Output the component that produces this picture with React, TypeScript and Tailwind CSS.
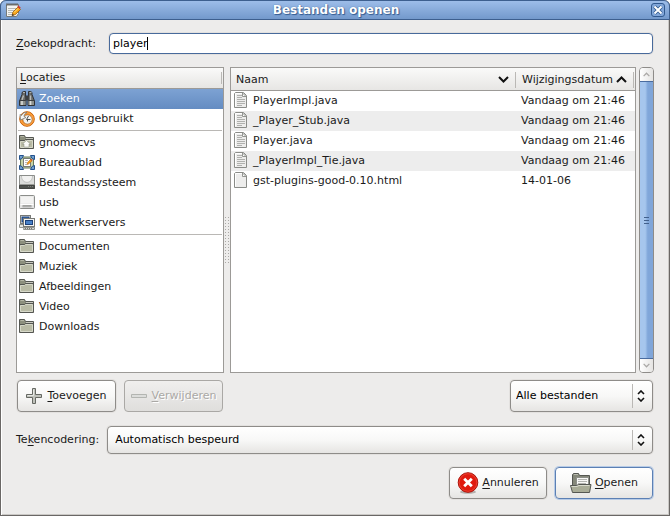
import { useState, type ReactNode } from "react";

const buttonFace =
  "flex h-8 items-center rounded border border-[#8e8c89] bg-linear-to-b from-white via-[#f8f8f7] to-[#e6e5e3] shadow-[0_0_0_1px_#e3e1df]";

const Mnemonic = ({ children }: { children: string }) => (
  <span className="underline underline-offset-2">{children}</span>
);

function NotepadIcon() {
  return (
    <svg width="16" height="16" viewBox="0 0 16 16" aria-hidden="true">
      <path d="M1.500 2.500h12v9l-2 3h-10z" fill="#f4f4f2" stroke="#777a78" />
      <path d="M2 1v3M4 1v3M6 1v3M8 1v3M10 1v3M12 1v3" stroke="#555" strokeWidth="0.8" />
      <path d="M3 6.500h9M3 8.500h7M3 10.500h5M3 12.500h4" stroke="#b6b8b5" />
      <path d="M7 13.500l1-3.500 5-5 2.500 2.500-5 5z" fill="#f9a61a" stroke="#a15d08" strokeWidth="0.8" />
      <path d="M12.300 4.700l1.200-1.200 2.300 2.300-1.300 1.200z" fill="#d33b2c" />
      <path d="M7 13.800l.6-2 1.500 1.400z" fill="#2e2e2e" />
      <path d="M9 10.500l4-4" stroke="#ffe27a" />
    </svg>
  );
}

function SearchIcon() {
  return (
    <svg width="16" height="16" viewBox="0 0 16 16" aria-hidden="true">
      <path d="M4.500.5h2V4L7 8v6.500H.5V10L3 3.500V1.500zM9.500.5h2l1.500 1v2L15.500 10v4.500H9V8l.5-4z" fill="#6a6c6a" stroke="#303234" />
      <rect x="6.500" y="4.500" width="3" height="5" fill="#3c3e40" />
      <path d="M4 1.500h2M10.500 1.500h2" stroke="#b0b2b0" />
      <path d="M4.500 4.500L3 9M11.500 4.500v5" stroke="#b9bbb8" strokeWidth="1.300" />
      <rect x="1" y="10" width="5.500" height="4" fill="#8d908c" />
      <rect x="9.500" y="10" width="5.500" height="4" fill="#8d908c" />
      <path d="M3 10v4M11.500 10v4" stroke="#dcdeda" strokeWidth="1.600" />
      <path d="M1 9.500h5.500M9.500 9.500H15" stroke="#3c3e40" />
    </svg>
  );
}

function RecentIcon() {
  return (
    <svg width="16" height="16" viewBox="0 0 16 16" aria-hidden="true">
      <circle cx="8" cy="8" r="7.300" fill="#f58a1f" stroke="#c9650f" />
      <circle cx="8" cy="8" r="6.200" fill="none" stroke="#ffb45d" strokeWidth="0.8" />
      <circle cx="8.500" cy="8.500" r="4.600" fill="#f3f3f1" stroke="#a7743f" strokeWidth="0.700" />
      <path d="M1 3.500l1.500 1C3.500 2 6 1 8 1.500 6 2.500 5 4 5 5.500l2 1L1.500 9z" fill="#f6f6f4" stroke="#777975" strokeWidth="0.800" />
      <path d="M9.500 5L7.500 8.500h4M8.500 8.500v2" stroke="#4b4d4a" fill="none" />
    </svg>
  );
}

function FolderIcon({ home = false }: { home?: boolean }) {
  return (
    <svg width="16" height="16" viewBox="0 0 16 16" aria-hidden="true">
      <path d="M.5 13.500V.5h5l1 2h8v11z" fill="#8c8f7d" stroke="#555752" />
      <path d="M1.500 1.500H5" stroke="#b5b7a6" />
      <path d="M7 3.500h7" stroke="#c9cac0" />
      <path d="M1.500 12.500v-6h4l1-1h7v7z" fill="#b9bba5" stroke="#d6d8c9" />
      <path d="M1 5.500h4.500l1-1h8" fill="none" stroke="#555752" />
      {home && <path d="M7.500 5.500l4 3.500H10v3H5V9H3.500z" fill="#fafaf7" stroke="#86887b" strokeWidth="0.500" />}
    </svg>
  );
}

function DesktopIcon() {
  return (
    <svg width="16" height="16" viewBox="0 0 16 16" aria-hidden="true">
      <rect x="1.500" y="2" width="13" height="11" fill="#c5d3a7" stroke="#68785d" />
      <path d="M.5.5h4l-1.500 3-2.500 1zM15.500.5h-4l1.500 3 2.500 1zM.5 14.500h4L3 11.500l-2.500-1zM15.500 14.500h-4l1.500-3 2.500-1z" fill="#719fd0" stroke="#23518c" />
      <rect x="4.500" y="3.500" width="7" height="8" fill="#fff" stroke="#777a76" />
      <path d="M6 5.500h3M6 7.500h2M6 9.500h2" stroke="#bbb" />
      <path d="M8 9.500l.5-2L11.500 4.500l1.500 1.500-3.500 3z" fill="#f6a21c" stroke="#b35d0c" strokeWidth="0.500" />
      <path d="M11.500 4.500l1.500 1.500.5-1-1-1z" fill="#d23327" />
    </svg>
  );
}

function DiskIcon() {
  return (
    <svg width="16" height="16" viewBox="0 0 16 16" aria-hidden="true">
      <path d="M.5.500h15v13H.5z" fill="#dcdddb" stroke="#8b8d8a" />
      <path d="M2.500 1C2.500 9.500 13.500 9.500 13.500 1" fill="#f2f2f1" stroke="#c0c1bf" />
      <path d="M.5 10.500h15v3H.5z" fill="#50534f" stroke="#434542" />
      <path d="M1 9.500h14" stroke="#9a9c98" />
      <path d="M9 11.500h5" stroke="#7d807b" strokeDasharray="1 1" />
    </svg>
  );
}

function UsbIcon() {
  return (
    <svg width="16" height="16" viewBox="0 0 16 16" aria-hidden="true">
      <rect x=".5" y=".5" width="15" height="13" rx="1" fill="#e3e3e2" stroke="#8b8d8a" />
      <path d="M2 1.500h12v7H2z" fill="#f3f3f2" />
      <path d="M1.500 9.500h13" stroke="#fff" />
      <path d="M3.500 11h9" stroke="#60625f" />
      <path d="M3.500 12h9" stroke="#b7b8b6" />
    </svg>
  );
}

function NetworkIcon() {
  return (
    <svg width="16" height="16" viewBox="0 0 16 16" aria-hidden="true">
      <rect x="1.500" y=".5" width="10" height="8" fill="#eeeeec" stroke="#777975" />
      <rect x="3" y="2" width="7" height="5" fill="#386eb5" stroke="#1c427b" />
      <path d="M.5 9.500h5v3h-5z" fill="#e2e3e0" stroke="#92948f" />
      <rect x="4.500" y="3.500" width="11" height="8" fill="#f4f4f2" stroke="#777975" />
      <rect x="6.500" y="5.500" width="7" height="4" fill="#4880c7" stroke="#1c427b" />
      <path d="M5 12.500h10.500v2H4.500z" fill="#d5d7d2" stroke="#92948f" />
      <path d="M6 13.500h8" stroke="#777" strokeDasharray="1 1" />
    </svg>
  );
}

function FileIcon({ lines = true }: { lines?: boolean }) {
  return (
    <svg width="14" height="18" viewBox="0 0 14 18" aria-hidden="true" className="shrink-0">
      <path d="M1.500.5h8l3 3v12h-12V1.500z" fill="#ededec" stroke="#8a8c88" />
      <path d="M1.500 14.500v-13h7" fill="none" stroke="#fff" />
      <path d="M8.500 1v3.500h3.500z" fill="#fff" stroke="#8a8c88" strokeWidth="0.900" />
      {lines && <path d="M3 3.500h5M3 5.500h5M3 7.500h8M3 9.500h8M3 11.500h8M3 13.500h5" stroke="#b0b1ae" />}
    </svg>
  );
}

function AddIcon() {
  return (
    <svg width="16" height="16" viewBox="0 0 16 16" aria-hidden="true">
      <path d="M6.500.5h3v6h6v3h-6v6h-3v-6h-6v-3h6z" fill="#c0c2bb" stroke="#666963" />
      <path d="M7.500 1.500v6h-6" fill="none" stroke="#e7e8e4" />
    </svg>
  );
}

function RemoveIcon() {
  return (
    <svg width="16" height="16" viewBox="0 0 16 16" aria-hidden="true">
      <path d="M.5 6.500h15v3H.5z" fill="#dcdddb" stroke="#b3b5b1" />
    </svg>
  );
}

function CancelIcon() {
  return (
    <svg width="22" height="22" viewBox="0 0 22 22" aria-hidden="true">
      <ellipse cx="11" cy="20" rx="8" ry="1.800" fill="#b3b0ad" />
      <circle cx="11" cy="10.500" r="9.800" fill="#e01a0e" stroke="#a81008" />
      <circle cx="11" cy="10.500" r="8.800" fill="none" stroke="#ee4a3a" strokeWidth="0.8" />
      <path d="M7.200 6.700l7.600 7.600M14.800 6.700l-7.600 7.600" stroke="#fff" strokeWidth="2.800" />
    </svg>
  );
}

function OpenIcon() {
  return (
    <svg width="22" height="22" viewBox="0 0 22 22" aria-hidden="true">
      <path d="M2.500 17V2.500l1-1h5l1 2h10V14" fill="#85887a" stroke="#555752" />
      <path d="M4 2.500h4" stroke="#b9bbaf" />
      <path d="M6.500 5.500h12v9h-12z" fill="#f7f7f5" stroke="#8d8f89" />
      <path d="M8 7.500h9M8 9.500h9M8 11.500h8" stroke="#b3b4b0" />
      <path d="M.5 13.500h6l2-1h12.500l-1.500 8h-17z" fill="#a9ac97" stroke="#555752" />
      <path d="M1.500 14.500h5.500l2-1h10.500" fill="none" stroke="#d7d9cb" />
    </svg>
  );
}

function Chevron({ up = false, muted = false }: { up?: boolean; muted?: boolean }) {
  return (
    <svg width={muted ? 7 : 11} height={muted ? 5 : 7} viewBox="0 0 11 7" aria-hidden="true">
      <path d={up ? "M1 6l4.500-4.500L10 6" : "M1 1l4.500 4.500L10 1"} fill="none" stroke={muted ? "#aaa8a6" : "#111"} strokeWidth="2" />
    </svg>
  );
}

function Combo({ id, label, option, className }: { id: string; label?: string; option: string; className: string }) {
  return (
    <div className={`relative ${className}`}>
      <select
        id={id}
        aria-label={label}
        className="size-full appearance-none rounded border border-[#8e8c89] bg-linear-to-b from-white via-[#f8f8f7] to-[#e6e5e3] pr-7 text-black shadow-[0_0_0_1px_#e3e1df] outline-none"
      >
        <option>{option}</option>
      </select>
      <div className="pointer-events-none absolute inset-y-1 right-1 flex">
        <span className="w-px bg-[#bab8b5]" />
        <svg width="16" height="12" viewBox="0 0 16 12" aria-hidden="true" className="self-center">
          <path d="M5 4l3-3 3 3M5 8l3 3 3-3" fill="none" stroke="#111" strokeWidth="1.600" />
        </svg>
      </div>
    </div>
  );
}

type Place = { name: string; icon: ReactNode };

const placeGroups: Place[][] = [
  [
    { name: "Zoeken", icon: <SearchIcon /> },
    { name: "Onlangs gebruikt", icon: <RecentIcon /> },
  ],
  [
    { name: "gnomecvs", icon: <FolderIcon home /> },
    { name: "Bureaublad", icon: <DesktopIcon /> },
    { name: "Bestandssysteem", icon: <DiskIcon /> },
    { name: "usb", icon: <UsbIcon /> },
    { name: "Netwerkservers", icon: <NetworkIcon /> },
  ],
  ["Documenten", "Muziek", "Afbeeldingen", "Video", "Downloads"].map((name) => ({ name, icon: <FolderIcon /> })),
];

const files = [
  { name: "PlayerImpl.java", date: "Vandaag om 21:46" },
  { name: "_Player_Stub.java", date: "Vandaag om 21:46" },
  { name: "Player.java", date: "Vandaag om 21:46" },
  { name: "_PlayerImpl_Tie.java", date: "Vandaag om 21:46" },
  { name: "gst-plugins-good-0.10.html", date: "14-01-06" },
];

function Places() {
  const [selected, setSelected] = useState("Zoeken");
  return (
    <section className="flex w-52 shrink-0 flex-col border border-[#9c9a97] bg-white">
      <h2 className="flex h-[21px] items-center border-b border-[#9c9a97] bg-linear-to-b from-[#fafaf9] to-[#e6e5e3] pl-[3px]">
        <span className="flex-1"><Mnemonic>L</Mnemonic>ocaties</span>
        <span className="mr-px h-3 w-px bg-[#bab8b5]" />
      </h2>
      {placeGroups.map((group, i) => (
        <ul key={i} className={i > 0 ? "before:mx-px before:mt-px before:mb-0.5 before:block before:h-px before:bg-[#bab8b5]" : ""}>
          {group.map((p) => (
            <li key={p.name}>
              <button
                onClick={() => setSelected(p.name)}
                className={`flex h-5 w-full items-center gap-1 pl-0.5 text-left ${
                  selected === p.name ? "bg-linear-to-b from-[#7da2d3] to-[#648cc2] text-white" : ""
                }`}
              >
                {p.icon}
                {p.name}
              </button>
            </li>
          ))}
        </ul>
      ))}
    </section>
  );
}

function Files() {
  return (
    <section className="min-w-0 flex-1 border border-[#9c9a97] bg-white">
      <table className="w-full table-fixed border-collapse">
        <thead>
          <tr className="h-[23px] bg-linear-to-b from-[#fafaf9] to-[#e6e5e3] shadow-[inset_0_-1px_0_#9c9a97]">
            <th className="p-0 font-normal">
              <button className="flex w-full items-center pl-[5px] text-left">
                <span className="flex-1">Naam</span>
                <Chevron />
                <span className="ml-1.5 h-4 w-px bg-[#bab8b5]" />
              </button>
            </th>
            <th className="w-[119px] p-0 font-normal">
              <button className="flex w-full items-center pl-1.5 text-left">
                <span className="flex-1">Wijzigingsdatum</span>
                <Chevron up />
                <span className="mr-px ml-1.5 h-4 w-px bg-[#bab8b5]" />
              </button>
            </th>
          </tr>
        </thead>
        <tbody>
          {files.map((f, i) => (
            <tr key={f.name} className="h-5 even:bg-[#ededed]">
              <td className="p-0">
                <div className="flex items-center gap-[5px] pl-[3px]">
                  <FileIcon lines={i < 4} />
                  {f.name}
                </div>
              </td>
              <td className="p-0 pl-[5px]">{f.date}</td>
            </tr>
          ))}
        </tbody>
      </table>
    </section>
  );
}

function ScrollBar() {
  return (
    <div className="ml-[3px] flex w-[15px] shrink-0 flex-col overflow-hidden rounded border border-[#8e8c89] bg-[#f4f4f2]">
      <button aria-label="Omhoog" className="flex h-[13px] items-center justify-center bg-linear-to-r from-white to-[#e5e4e2]">
        <Chevron up muted />
      </button>
      <div className="-mx-px flex flex-1 flex-col items-center justify-center gap-0.5 border border-[#4a6c9f] bg-linear-to-r from-[#a6c6ed] from-40% to-[#80a6d9] to-60%">
        <span className="h-px w-[5px] bg-[#42618d]" />
        <span className="h-px w-[5px] bg-[#42618d]" />
        <span className="h-px w-[5px] bg-[#42618d]" />
      </div>
      <button aria-label="Omlaag" className="flex h-[13px] items-center justify-center bg-linear-to-r from-white to-[#e5e4e2]">
        <Chevron muted />
      </button>
    </div>
  );
}

export default function App() {
  const [query, setQuery] = useState("player");
  return (
    <main className="flex min-h-screen flex-col rounded-t-md border border-t-0 border-[#6a6765] bg-[#edeceb] font-['DejaVu_Sans',sans-serif] text-[11px] leading-4 text-[#1a1a1a] shadow-[inset_1px_0_0_#fff,inset_-1px_-1px_0_#cac8c5]">
      <header className="-mx-px flex h-5 items-center rounded-t-md border border-[#3d5f8f] bg-linear-to-b from-[#9dbde9] to-[#7399cc] px-1">
        <NotepadIcon />
        <h1 className="flex-1 text-center text-[12px] font-bold text-white [text-shadow:0_0_1px_#335a90,1px_1px_1px_#335a90]">
          Bestanden openen
        </h1>
        <button aria-label="Sluiten" className="flex size-3.5 items-center justify-center rounded-[3px] border border-[#31598f] bg-[#82a7da]">
          <svg width="10" height="10" viewBox="0 0 10 10" aria-hidden="true">
            <path d="M1.500 1.500l7 7M8.500 1.500l-7 7" stroke="#31598f" strokeWidth="3.600" />
            <path d="M1.500 1.500l7 7M8.500 1.500l-7 7" stroke="#fff" strokeWidth="2" />
          </svg>
        </button>
      </header>

      <div className="flex flex-1 flex-col px-[15px] pt-[13px] pb-4">
        <div className="flex items-center gap-[13px] pr-px">
          <label htmlFor="query"><Mnemonic>Z</Mnemonic>oekopdracht:</label>
          <div className="relative flex-1">
            <input
              id="query"
              value={query}
              onChange={(e) => setQuery(e.target.value)}
              className="block h-[21px] w-full rounded border border-[#486a9b] bg-white pl-[3px] text-black caret-transparent shadow-[0_0_0_1px_#e3e1df] outline-none"
            />
            {query === "player" && <span className="absolute top-1 left-[38px] h-[13px] w-px bg-black" />}
          </div>
        </div>

        <div className="mt-[13px] flex flex-1 items-stretch">
          <Places />
          <div className="flex w-1.5 shrink-0 items-center">
            <div className="mt-10 h-12 w-full bg-[radial-gradient(#aaa8a5_35%,transparent_40%)] bg-size-[3px_3px]" />
          </div>
          <Files />
          <ScrollBar />
        </div>

        <div className="mt-[7px] flex justify-between pr-px">
          <div className="flex gap-2 pl-px">
            <button className={`${buttonFace} w-[99px] justify-center gap-[5px]`}>
              <AddIcon />
              <span><Mnemonic>T</Mnemonic>oevoegen</span>
            </button>
            <button disabled className="flex h-8 w-[99px] items-center justify-center gap-[5px] rounded border border-[#aaa8a5] bg-linear-to-b from-[#f0efee] to-[#dfdedc] text-[#aaa8a5] [text-shadow:1px_1px_0_#fff]">
              <RemoveIcon />
              <span><Mnemonic>V</Mnemonic>erwijderen</span>
            </button>
          </div>
          <Combo id="filter" label="Bestandstype" option="Alle bestanden" className="h-8 w-[143px] [&>select]:pl-[5px]" />
        </div>

        <div className="mt-3.5 flex items-center gap-2 pr-px">
          <label htmlFor="encoding">Te<Mnemonic>k</Mnemonic>encodering:</label>
          <Combo id="encoding" option="Automatisch bespeurd" className="h-7 flex-1 [&>select]:pl-[7px]" />
        </div>

        <div className="mt-[13px] flex justify-end gap-2 pr-px">
          <button className={`${buttonFace} w-[98px] justify-center gap-[3px]`}>
            <CancelIcon />
            <span><Mnemonic>A</Mnemonic>nnuleren</span>
          </button>
          <button className="flex h-8 w-[98px] items-center justify-center gap-[3px] rounded border border-[#5c80b4] bg-linear-to-b from-white via-[#f8f8f7] to-[#e6e5e3] shadow-[0_0_0_1px_#b7cbe6]">
            <OpenIcon />
            <span><Mnemonic>O</Mnemonic>penen</span>
          </button>
        </div>
      </div>
    </main>
  );
}
